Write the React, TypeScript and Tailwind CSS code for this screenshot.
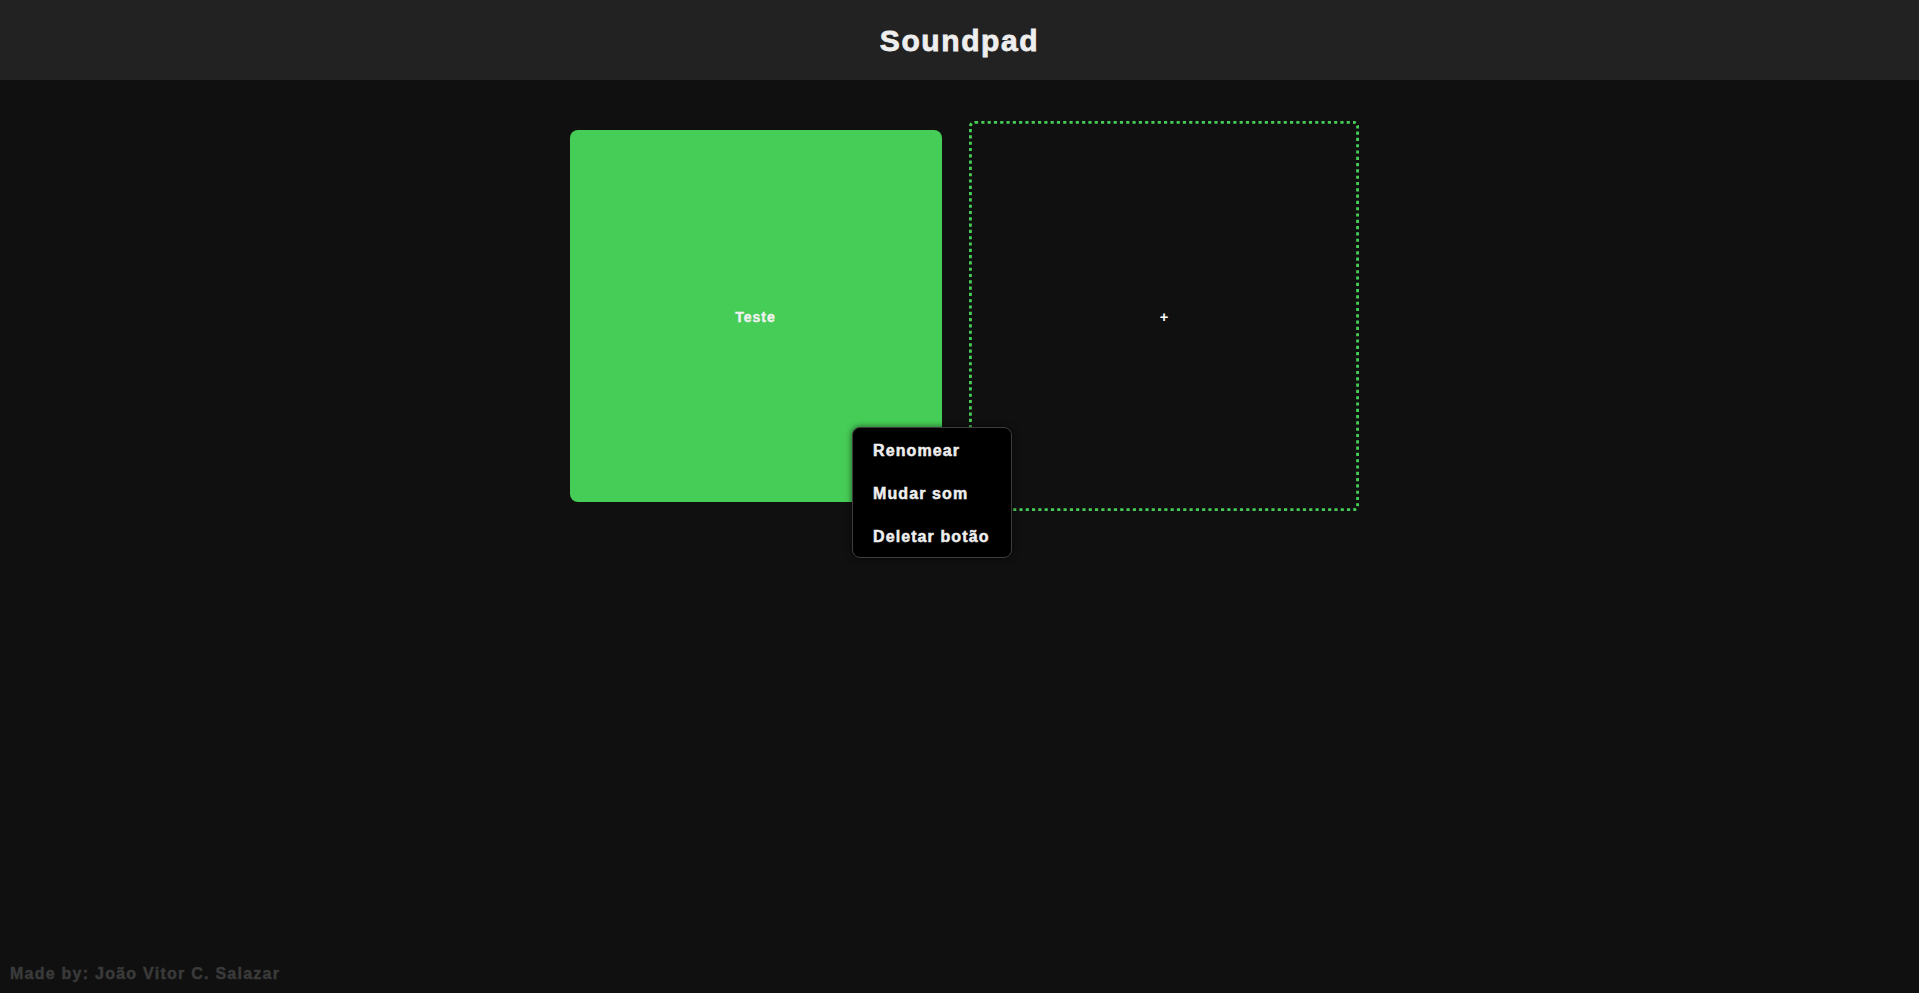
const font = { fontFamily: '"Liberation Sans", Arial, sans-serif' };

function Pad({ label }: { label: string }) {
  return (
    <button className="flex h-[372px] w-[372px] items-center justify-center rounded-lg bg-[#46cd57] pt-[2px] text-[14px] font-bold tracking-[1px] text-[#f2f2f2] [-webkit-text-stroke:0.4px_currentColor]">
      {label}
    </button>
  );
}

function AddPad() {
  return (
    <button className="flex h-[372px] w-[372px] scale-105 items-center justify-center rounded-md border-[3px] border-dotted border-[#46cd57] pt-[2px] text-[14px] font-bold text-white">
      +
    </button>
  );
}

function ContextMenu() {
  const items = ["Renomear", "Mudar som", "Deletar botão"];
  return (
    <ul className="absolute left-[852px] top-[427px] w-[160px] rounded-lg border border-[#3d3d3d] bg-black shadow-[0_0_6px_rgba(0,0,0,0.6)]">
      {items.map((item) => (
        <li
          key={item}
          className="flex h-[43px] items-center px-5 pt-[2px] text-[16px] font-bold tracking-[1.1px] text-[#eeeeee] [-webkit-text-stroke:0.5px_currentColor]"
        >
          {item}
        </li>
      ))}
    </ul>
  );
}

export default function App() {
  return (
    <div style={font} className="relative flex h-[993px] flex-col bg-[#101010]">
      <header className="flex h-[80px] items-center justify-center bg-[#222222]">
        <h1 className="pt-[1px] text-[30px] font-bold tracking-[1.6px] text-[#eeeeee] [-webkit-text-stroke:0.8px_currentColor]">
          Soundpad
        </h1>
      </header>

      <main className="mt-[50px] flex justify-center gap-[36px]">
        <Pad label="Teste" />
        <AddPad />
      </main>

      <footer className="mt-auto px-[10px] pb-[7px] text-[16px] font-bold tracking-[1.25px] text-[#3a3a3a] [-webkit-text-stroke:0.5px_currentColor]">
        Made by: João Vitor C. Salazar
      </footer>

      <ContextMenu />
    </div>
  );
}
